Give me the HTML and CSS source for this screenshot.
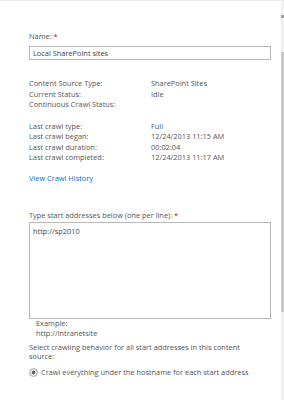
FILE: index.html
```html
<!DOCTYPE html>
<html>
<head>
<meta charset="utf-8">
<link rel="stylesheet" href="styles.css">
</head>
<body>
<div class="page">
  <div class="content">
    <div class="label">Name: <span class="req">*</span></div>
    <div class="input">Local SharePoint sites</div>

    <div class="info">
      <div class="row"><span class="k">Content Source Type:</span><span>SharePoint Sites</span></div>
      <div class="row"><span class="k">Current Status:</span><span>Idle</span></div>
      <div class="row"><span class="k">Continuous Crawl Status:</span><span></span></div>
    </div>

    <div class="info gap">
      <div class="row"><span class="k">Last crawl type:</span><span>Full</span></div>
      <div class="row"><span class="k">Last crawl began:</span><span>12/24/2013 11:15 AM</span></div>
      <div class="row"><span class="k">Last crawl duration:</span><span>00:02:04</span></div>
      <div class="row"><span class="k">Last crawl completed:</span><span>12/24/2013 11:17 AM</span></div>
    </div>

    <a class="link">View Crawl History</a>

    <div class="label addr">Type start addresses below (one per line): <span class="req">*</span></div>
    <div class="textarea">http://sp2010</div>
    <div class="example">
      <div>Example:</div>
      <div>http://intranetsite</div>
    </div>

    <p class="select">Select crawling behavior for all start addresses in this content source:</p>

    <div class="radio"><span class="dot"></span>Crawl everything under the hostname for each start address</div>
  </div>
  <div class="scrollbar"><div class="arrow"></div><div class="thumb"></div></div>
</div>
</body>
</html>
```
FILE: styles.css
```css
html, body {
  margin: 0;
  padding: 0;
  background: #fff;
}
body {
  font-family: "Open Sans", "Noto Sans", sans-serif;
  font-size: 7.4px;
  color: #555;
  width: 284px;
  height: 400px;
  overflow: hidden;
}
.page {
  display: flex;
  height: 400px;
  border-top: 1px solid #ececec;
  box-sizing: border-box;
}
.content {
  flex: 1;
  padding: 30px 10px 0 29px;
  line-height: 10.3px;
}
.req { color: #c00000; }
.input {
  margin-top: 5px;
  height: 12px;
  border: 1px solid #b8b8b8;
  padding: 0 3px;
  line-height: 12px;
  color: #444;
}
.info { margin-top: 18px; }
.info.gap { margin-top: 12px; }
.row { display: flex; }
.row .k { width: 122px; }
.link {
  display: block;
  color: #0072c6;
  margin-top: 11px;
}
.addr { margin-top: 26px; }
.textarea {
  margin-top: 2px;
  height: 89px;
  border: 1px solid #b8b8b8;
  padding: 3px 3px;
  color: #444;
}
.example {
  margin-top: -1px;
  padding-left: 7px;
  line-height: 10px;
}
.select {
  margin: 5px 0 0;
  width: 220px;
  line-height: 9.5px;
}
.radio {
  margin-top: 5px;
  display: flex;
  align-items: center;
}
.dot {
  width: 7px;
  height: 7px;
  border: 1px solid #aaa;
  border-radius: 50%;
  background: radial-gradient(circle, #666 0 1.6px, #e8e8e8 2.2px);
  margin-right: 3px;
}
.scrollbar {
  width: 3px;
  background: #f1f1f1;
  display: flex;
  flex-direction: column;
}
.arrow {
  margin-top: 14px;
  height: 3px;
  background: #a0a0a0;
}
.thumb {
  margin-top: 34px;
  height: 260px;
  background: #c9c9c9;
}
```
